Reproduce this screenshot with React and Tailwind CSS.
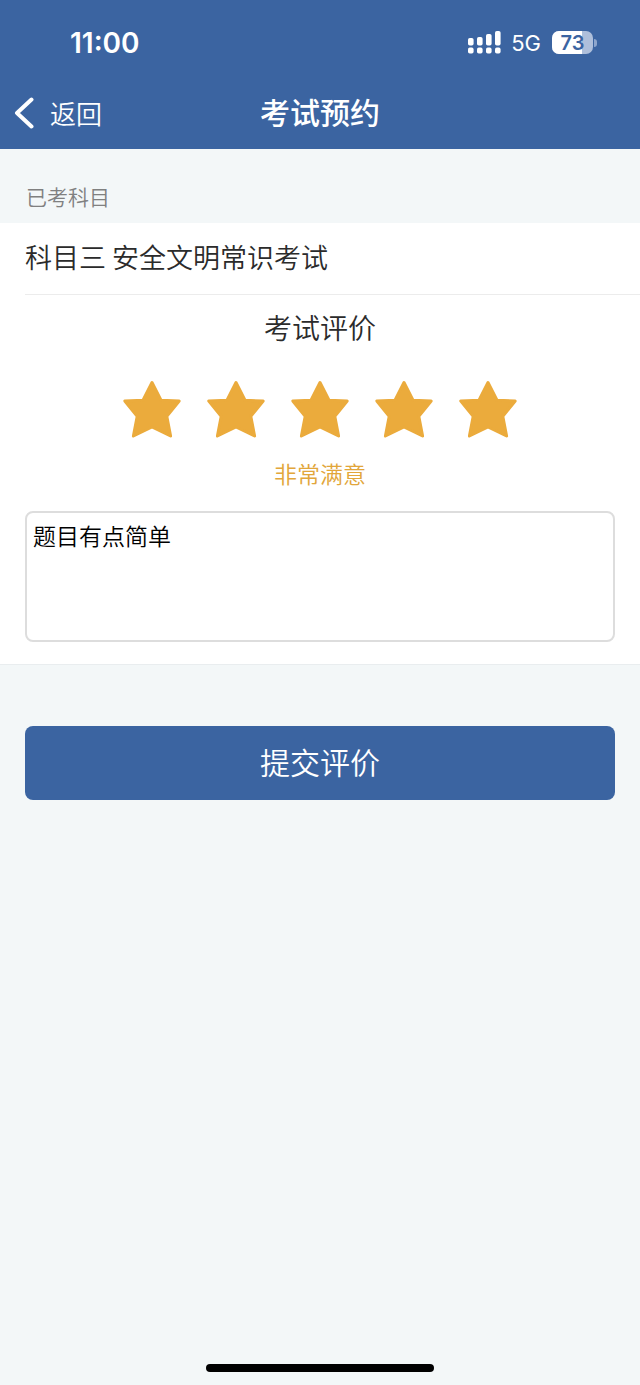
import { useState } from "react";

const RATINGS = ["非常不满意", "不满意", "一般", "满意", "非常满意"];

function SignalIcon() {
  const bars = [
    { x: 0, y: 7, h: 7 },
    { x: 9, y: 6, h: 8 },
    { x: 18, y: 3, h: 11 },
    { x: 27, y: 0, h: 14 },
  ];
  return (
    <svg width="33" height="23" viewBox="0 0 33 23" fill="currentColor" aria-hidden="true">
      {bars.map((b) => (
        <g key={b.x}>
          <rect x={b.x} y={b.y} width="5.6" height={b.h + 0.6} rx="1.8" />
          <rect x={b.x} y="16.6" width="5.6" height="6" rx="1.8" />
        </g>
      ))}
    </svg>
  );
}

function Battery({ level }) {
  return (
    <div className="flex items-center gap-px">
      <div className="relative h-[23px] w-[41px] overflow-hidden rounded-[7px] bg-[#aebfdb]">
        <div className="absolute inset-y-0 left-0 bg-white" style={{ width: `${level}%` }} />
        <span className="relative block text-center text-[20px] leading-6 font-semibold text-[#3b64a1]">
          {level}
        </span>
      </div>
      <div className="h-2 w-[3px] rounded-r-full bg-[#8ea6cd]" />
    </div>
  );
}

function StatusBar() {
  return (
    <div className="flex h-[77px] items-center justify-between pt-2 pr-[43px] pl-[70px] font-['Inter',sans-serif] font-normal">
      <span className="text-[28px] leading-8 font-semibold">11:00</span>
      <div className="flex items-center">
        <SignalIcon />
        <span className="ml-[10px] text-[22px] leading-6">5G</span>
        <div className="ml-[11px]">
          <Battery level={73} />
        </div>
      </div>
    </div>
  );
}

function NavBar() {
  return (
    <div className="grid h-[72px] grid-cols-[1fr_auto_1fr] items-center px-[14px]">
      <button type="button" className="flex items-center gap-4 justify-self-start text-[26px] leading-9">
        <svg width="20" height="32" viewBox="0 0 20 32" fill="none" stroke="currentColor" strokeWidth="4" strokeLinecap="round" strokeLinejoin="round" aria-hidden="true">
          <path d="M17.5 2.5 3 16l14.5 13.5" />
        </svg>
        <span>返回</span>
      </button>
      <h1 className="pb-1 text-[30px] leading-10 font-medium">考试预约</h1>
    </div>
  );
}

function StarRating({ value, onChange }) {
  return (
    <fieldset aria-labelledby="rating-title" className="mt-8 flex justify-center gap-6">
      {RATINGS.map((name, i) => (
        <label key={name} className="relative cursor-pointer">
          <input
            type="radio"
            name="rating"
            value={i + 1}
            checked={value === i + 1}
            onChange={() => onChange(i + 1)}
            aria-label={name}
            className="sr-only"
          />
          <svg
            width="60"
            height="60"
            viewBox="0 0 60 60"
            strokeWidth="3"
            strokeLinejoin="round"
            className={i < value ? "fill-[#ebab3c] stroke-[#ebab3c]" : "fill-[#dddddd] stroke-[#dddddd]"}
            aria-hidden="true"
          >
            <path d="M30 3.5 39 21.3 57.2 22 44.8 37.2 48.6 57 30 48 11.4 57 15.2 37.2 2.8 22 21 21.3Z" />
          </svg>
        </label>
      ))}
    </fieldset>
  );
}

export default function App() {
  const [rating, setRating] = useState(5);
  const [comment, setComment] = useState("题目有点简单");

  return (
    <div className="flex min-h-screen flex-col bg-[#f3f7f8] font-['Noto_Sans_CJK_SC',sans-serif] font-[350] text-[#2b2b2b]">
      <header className="bg-[#3b64a1] text-white">
        <StatusBar />
        <NavBar />
      </header>

      <main>
        <h2 className="px-[26px] pt-[30px] pb-[10px] text-[21px] leading-[34px] text-[#808080]">已考科目</h2>

        <form onSubmit={(e) => e.preventDefault()}>
          <section className="border-b border-[#e9edef] bg-white pb-[22px]">
            <div className="ml-[25px] border-b border-[#ececec] pb-[3px] text-[27px] leading-[68px]">
              科目三 安全文明常识考试
            </div>
            <h3 id="rating-title" className="mt-3 text-center text-[28px] leading-10">考试评价</h3>
            <StarRating value={rating} onChange={setRating} />
            <p className="mt-4 text-center text-[23px] leading-9 text-[#e2a63a]">{RATINGS[rating - 1]}</p>
            <div className="mt-5 px-[25px]">
              <textarea
                aria-label="评价内容"
                value={comment}
                onChange={(e) => setComment(e.target.value)}
                className="block h-[131px] w-full resize-none rounded-lg border-2 border-[#dddddd] bg-white px-[6px] py-1 text-[23px] leading-9 text-black outline-none"
              />
            </div>
          </section>

          <div className="px-[25px] pt-[61px]">
            <button type="submit" className="block h-[74px] w-full rounded-lg bg-[#3b64a1] pb-1 text-[30px] leading-10 text-white">
              提交评价
            </button>
          </div>
        </form>
      </main>

      <footer className="mt-auto flex justify-center pt-6 pb-[13px]">
        <div className="h-2 w-[228px] rounded-full bg-black" />
      </footer>
    </div>
  );
}
